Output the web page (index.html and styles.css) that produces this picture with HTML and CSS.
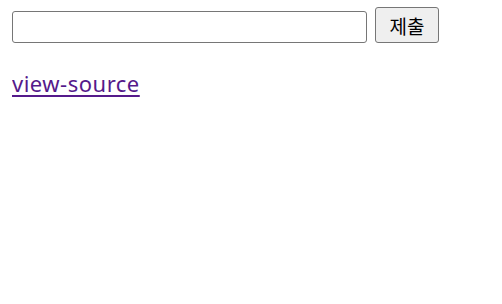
FILE: index.html
```html
<!DOCTYPE html>
<html lang="ko">
  <head>
    <meta charset="UTF-8" />
    <title>view-source</title>
    <link rel="stylesheet" href="styles.css">
  </head>
  <body>
    <form class="searchForm">
      <input class="searchInput" type="text" />
      <button class="submitBtn" type="button">제출</button>
    </form>
    <p class="sourceLink"><a href="#">view-source</a></p>
  </body>
</html>
```

FILE: styles.css
```css
body {
  margin: 7px 12px;
  background: #fff;
  font-family: "Noto Sans", "Noto Sans CJK KR", sans-serif;
  font-size: 20px;
}

.searchForm {
  display: flex;
  align-items: flex-end;
  gap: 8px;
  margin: 0;
}

.searchInput {
  width: 355px;
  height: 32px;
  box-sizing: border-box;
  border: 1px solid #767676;
  border-radius: 3px;
  padding: 0 4px;
  font: inherit;
}

.submitBtn {
  width: 64px;
  height: 36px;
  box-sizing: border-box;
  border: 1px solid #767676;
  border-radius: 3px;
  background: #efefef;
  color: #000;
  font-family: "Noto Sans CJK KR", sans-serif;
  font-size: 19px;
  line-height: 1;
  padding: 0;
}

.sourceLink {
  margin: 26px 0 0;
  line-height: 28px;
  font-size: 22px;
  letter-spacing: 0.5px;
}

.sourceLink a {
  color: #551a8b;
  text-decoration-thickness: 2px;
  text-underline-offset: 3px;
}
```
